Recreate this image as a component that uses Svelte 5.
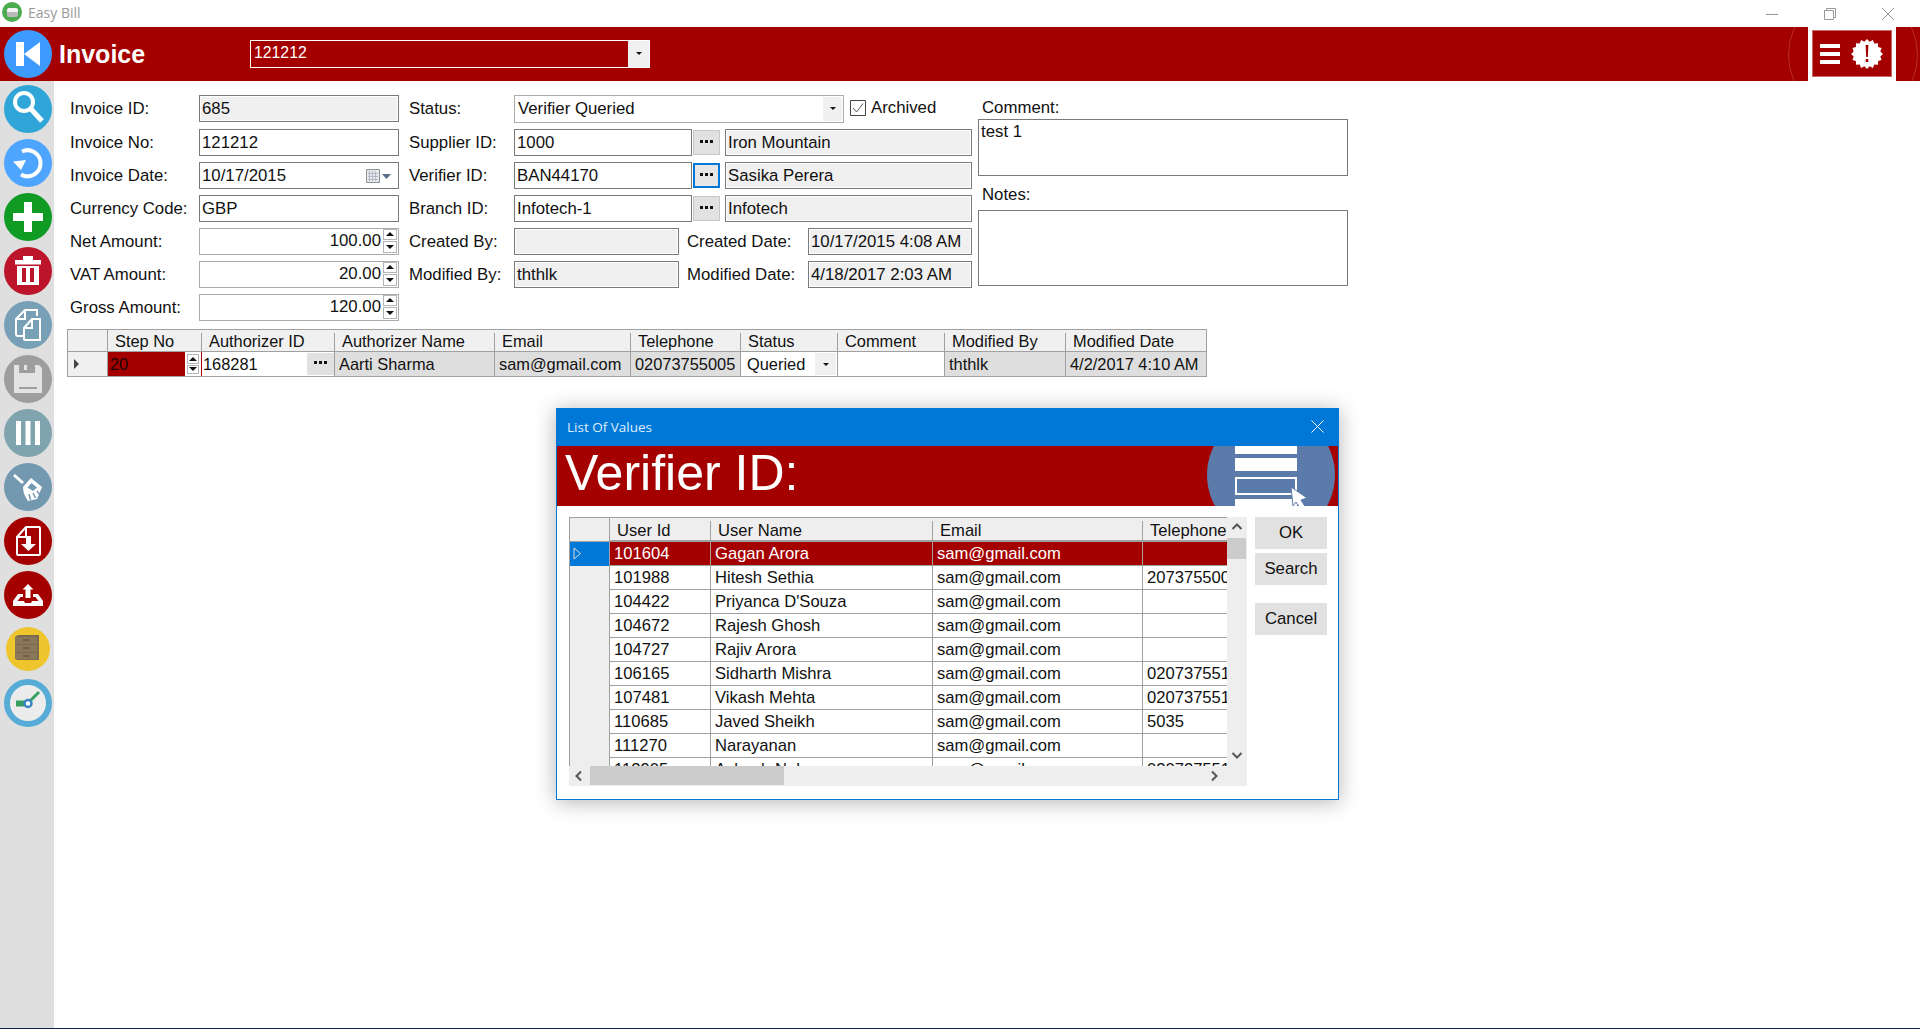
<script>
  const columns = [
    { title: "Step No", w: 94 },
    { title: "Authorizer ID", w: 133 },
    { title: "Authorizer Name", w: 160 },
    { title: "Email", w: 136 },
    { title: "Telephone", w: 110 },
    { title: "Status", w: 97 },
    { title: "Comment", w: 107 },
    { title: "Modified By", w: 121 },
    { title: "Modified Date", w: 141 },
  ];

  const users = [
    ["101604", "Gagan Arora", "sam@gmail.com", ""],
    ["101988", "Hitesh Sethia", "sam@gmail.com", "2073755005"],
    ["104422", "Priyanca D'Souza", "sam@gmail.com", ""],
    ["104672", "Rajesh Ghosh", "sam@gmail.com", ""],
    ["104727", "Rajiv Arora", "sam@gmail.com", ""],
    ["106165", "Sidharth Mishra", "sam@gmail.com", "02073755100"],
    ["107481", "Vikash Mehta", "sam@gmail.com", "02073755100"],
    ["110685", "Javed Sheikh", "sam@gmail.com", "5035"],
    ["111270", "Narayanan", "sam@gmail.com", ""],
    ["112905", "Ashesh Nale", "sam@gmail.com", "02073755140"],
  ];
</script>

{#snippet spin()}
  <span class="spin">
    <span class="spin-btn"><i class="up"></i></span>
    <span class="spin-btn"><i class="down"></i></span>
  </span>
{/snippet}

{#snippet dots()}
  <span class="dots"><i></i><i></i><i></i></span>
{/snippet}

<div class="window">
  <div class="titlebar">
    <div class="app-title">
      <span class="app-icon"><span></span></span>
      <span>Easy Bill</span>
    </div>
    <div class="window-controls">
      <svg width="12" height="12" viewBox="0 0 12 12"><path d="M0 6.5h12" stroke="#999" fill="none" /></svg>
      <svg width="12" height="12" viewBox="0 0 12 12"><path d="M.5 2.5h9v9h-9zM2.5 2.5v-2h9v9h-2" stroke="#999" fill="none" /></svg>
      <svg width="12" height="12" viewBox="0 0 12 12"><path d="M0 0l12 12M12 0L0 12" stroke="#999" fill="none" /></svg>
    </div>
  </div>

  <header class="header">
    <span class="arc"></span>
    <span class="nav-btn back">
      <svg width="48" height="48" viewBox="0 0 48 48"><path d="M12 12h8v24h-8zM20 24l16-12v24z" fill="#fff" /></svg>
    </span>
    <h1>Invoice</h1>
    <div class="combo">
      <span>121212</span>
      <span class="combo-btn"><i class="down small"></i></span>
    </div>
    <div class="header-actions">
      <div class="action-box">
        <span class="burger"><i></i><i></i><i></i></span>
        <svg width="32" height="32" viewBox="0 0 32 32">
          <path fill="#fff" d="M16 1l2.6 2.7 3.3-1.6 1.4 3.4 3.7-.3.1 3.7 3.5 1.2-1.3 3.4 2.7 2.5-2.7 2.5 1.3 3.4-3.5 1.2-.1 3.7-3.7-.3-1.4 3.4-3.3-1.6L16 31l-2.6-2.7-3.3 1.6-1.4-3.4-3.7.3-.1-3.7-3.5-1.2 1.3-3.4L0 16l2.7-2.5-1.3-3.4 3.5-1.2.1-3.7 3.7.3 1.4-3.4 3.3 1.6z" />
          <path fill="#a50000" d="M14.6 7h2.8l-.6 12h-1.600zM14.700 21h2.600v3h-2.600z" />
        </svg>
      </div>
    </div>
  </header>

  <div class="body">
    <nav class="sidebar">
      <span class="nav-btn search">
        <svg width="48" height="48" viewBox="0 0 48 48"><circle cx="20" cy="17" r="9" fill="none" stroke="#fff" stroke-width="4" /><path d="M27 24l11 12" stroke="#fff" stroke-width="5" fill="none" /></svg>
      </span>
      <span class="nav-btn refresh">
        <svg width="48" height="48" viewBox="0 0 48 48"><path d="M18 12.500a13 13 0 1 1-1 23" fill="none" stroke="#fff" stroke-width="4" /><path d="M9 22.500l13-1.500-5 10z" fill="#fff" /></svg>
      </span>
      <span class="nav-btn add">
        <svg width="48" height="48" viewBox="0 0 48 48"><path d="M20 9h8v11h11v8H28v11h-8V28H9v-8h11z" fill="#fff" /></svg>
      </span>
      <span class="nav-btn del">
        <svg width="48" height="48" viewBox="0 0 48 48"><path fill="#fff" fill-rule="evenodd" d="M11 13h8V9h10v4h8v4.500H11zM13 19h22v19H13zM18 21v14h4V21zM26 21v14h4V21z" /></svg>
      </span>
      <span class="nav-btn copy">
        <svg width="48" height="48" viewBox="0 0 48 48"><path d="M19 35h-5a2 2 0 0 1-2-2V18l9-9h12v6M21 9v9h-9M28 18h8v21H21a1 1 0 0 1-1-1V27zM28 18v9h-8" fill="none" stroke="#fff" stroke-width="2" /></svg>
      </span>
      <span class="nav-btn save">
        <svg width="48" height="48" viewBox="0 0 48 48"><path fill="#e3e3e3" fill-rule="evenodd" d="M10 10h5v8h16v-8h4l3 3v25H10zM20 10h3v5h-3zM15 32v2h18v-2z" /></svg>
      </span>
      <span class="nav-btn cols">
        <svg width="48" height="48" viewBox="0 0 48 48"><path d="M12 12h5v24h-5zM21.500 12h5v24h-5zM31 12h5v24h-5z" fill="#fff" /></svg>
      </span>
      <span class="nav-btn broom">
        <svg width="48" height="48" viewBox="0 0 48 48">
          <path d="M10 12l9 8" stroke="#fff" stroke-width="3" fill="none" />
          <path d="M19 24l8-9 11 9-5 12-9 2c-3-4-5-9-5-14z" fill="#fff" />
          <path d="M23.500 24.500l4-4.500 5.500 4.500-4 3.500z" fill="#7399b1" />
          <path d="M25 31l1.500 6M29 30l2.500 5M33 28l3 4" stroke="#7399b1" stroke-width="1.500" fill="none" />
        </svg>
      </span>
      <span class="nav-btn dl">
        <svg width="48" height="48" viewBox="0 0 48 48"><path d="M22 10h13a1 1 0 0 1 1 1v26a1 1 0 0 1-1 1H14a1 1 0 0 1-1-1V20zM22 10v10H13" fill="none" stroke="#fff" stroke-width="2" /><path d="M22 19h5v8h5l-7.500 7-7.500-7h5z" fill="#fff" /></svg>
      </span>
      <span class="nav-btn ul">
        <svg width="48" height="48" viewBox="0 0 48 48"><path d="M24 13l5.500 5.500h-3V27h-5v-8.500h-3z" fill="#fff" /><path d="M14 23h5v3h-2.500l-3 4H20l1 2h6l1-2h6.500l-3-4H29v-3h5l5 7v5H9v-5z" fill="#fff" /></svg>
      </span>
      <span class="nav-btn archive">
        <span class="yellow">
          <svg width="44" height="44" viewBox="0 0 44 44">
            <path d="M9 10l3-2h21v25H11l-2-1z" fill="#7a6a50" />
            <path d="M9 10h22v7H9zM9 18h22v7H9zM9 26h22v6H9z" fill="#8a7658" />
            <path d="M17 13h6M17 21h6M17 29h6" stroke="#554733" />
          </svg>
        </span>
      </span>
      <span class="nav-btn clock">
        <svg width="48" height="48" viewBox="0 0 48 48"><circle cx="24" cy="24" r="21" fill="#ececec" stroke="#56acd6" stroke-width="6" /><path d="M12 21.500h12v6H12z" fill="#37a060" /><path d="M24 24l11-11" stroke="#37a060" stroke-width="3" fill="none" /><circle cx="24" cy="24.500" r="3.500" fill="#fff" stroke="#3a86c4" stroke-width="2.500" /></svg>
      </span>
    </nav>

    <main class="content">
      <div class="form">
        <div class="col col-left">
          <div class="row first"><span class="label">Invoice ID:</span><span class="field ro grow">685</span></div>
          <div class="row"><span class="label">Invoice No:</span><span class="field grow">121212</span></div>
          <div class="row">
            <span class="label">Invoice Date:</span>
            <span class="field grow date">
              10/17/2015
              <svg width="26" height="18" viewBox="0 0 26 18">
                <path d="M1.500 2.500h13v13h-13z" fill="#e6e9ee" stroke="#8c8f94" />
                <path d="M4.500 4v10M7.500 4v10M10.500 4v10M3 6.500h10M3 9.500h10M3 12.500h10" stroke="#b3bac4" />
                <path d="M17 7h9l-4.500 5z" fill="#5a6e8c" />
              </svg>
            </span>
          </div>
          <div class="row"><span class="label">Currency Code:</span><span class="field grow">GBP</span></div>
          <div class="row"><span class="label">Net Amount:</span><span class="field grow num">100.00{@render spin()}</span></div>
          <div class="row"><span class="label">VAT Amount:</span><span class="field grow num">20.00{@render spin()}</span></div>
          <div class="row"><span class="label">Gross Amount:</span><span class="field grow num">120.00{@render spin()}</span></div>
        </div>

        <div class="col col-mid">
          <div class="row first">
            <span class="label">Status:</span>
            <span class="select">
              <span>Verifier Queried</span>
              <span class="select-btn"><i class="down small"></i></span>
            </span>
            <span class="check">
              <svg width="16" height="16" viewBox="0 0 16 16"><path d="M.5.5h15v15H.5z" fill="#fff" stroke="#444" /><path d="M3 8l3.500 4L13 3.500" fill="none" stroke="#555" /></svg>
              Archived
            </span>
          </div>
          <div class="row">
            <span class="label">Supplier ID:</span>
            <span class="field id">1000</span>
            <span class="more">{@render dots()}</span>
            <span class="field ro grow name">Iron Mountain</span>
          </div>
          <div class="row">
            <span class="label">Verifier ID:</span>
            <span class="field id">BAN44170</span>
            <span class="more focused">{@render dots()}</span>
            <span class="field ro grow name">Sasika Perera</span>
          </div>
          <div class="row">
            <span class="label">Branch ID:</span>
            <span class="field id">Infotech-1</span>
            <span class="more">{@render dots()}</span>
            <span class="field ro grow name">Infotech</span>
          </div>
          <div class="row">
            <span class="label">Created By:</span>
            <span class="field ro by"></span>
            <span class="label date-label">Created Date:</span>
            <span class="field ro grow">10/17/2015 4:08 AM</span>
          </div>
          <div class="row">
            <span class="label">Modified By:</span>
            <span class="field ro by">ththlk</span>
            <span class="label date-label">Modified Date:</span>
            <span class="field ro grow">4/18/2017 2:03 AM</span>
          </div>
        </div>

        <div class="col-right">
          <span class="note-label">Comment:</span>
          <div class="area comment">test 1</div>
          <span class="note-label notes-label">Notes:</span>
          <div class="area notes"></div>
        </div>
      </div>

      <div class="grid">
        <div class="grid-row head">
          <span class="cell rowhead"></span>
          {#each columns as col}
            <span class="cell" style="width: {col.w}px"><span class="sep">{col.title}</span></span>
          {/each}
        </div>
        <div class="grid-row data">
          <span class="cell rowhead"><i class="right"></i></span>
          <span class="cell step" style="width: {columns[0].w}px">20{@render spin()}</span>
          <span class="cell edit" style="width: {columns[1].w}px">168281<span class="more cell-more">{@render dots()}</span></span>
          <span class="cell" style="width: {columns[2].w}px">Aarti Sharma</span>
          <span class="cell" style="width: {columns[3].w}px">sam@gmail.com</span>
          <span class="cell" style="width: {columns[4].w}px">02073755005</span>
          <span class="cell edit status" style="width: {columns[5].w}px">Queried<span class="cell-drop"><i class="down small"></i></span></span>
          <span class="cell edit" style="width: {columns[6].w}px"></span>
          <span class="cell" style="width: {columns[7].w}px">ththlk</span>
          <span class="cell" style="width: {columns[8].w}px">4/2/2017 4:10 AM</span>
        </div>
      </div>
    </main>
  </div>

  <div class="taskbar-line"></div>

  <div class="dialog">
    <div class="dialog-title">
      <span>List Of Values</span>
      <svg width="13" height="13" viewBox="0 0 13 13"><path d="M.5.5l12 12M12.500.5l-12 12" stroke="#fff" fill="none" /></svg>
    </div>
    <div class="dialog-band">
      <span class="band-title">Verifier ID:</span>
      <svg class="band-art" width="128" height="60" viewBox="0 0 128 60">
        <circle cx="64" cy="29" r="64" fill="#5b7bab" />
        <path d="M28 0h62v8H28zM28 12h62v13H28zM28 53h62v7H28z" fill="#fff" />
        <path d="M29 32h60v16H29z" fill="#5b7bab" stroke="#fff" stroke-width="2" />
        <path d="M84 41l16 11-6 2 5 8h-6l-4-6-3 4z" fill="#fff" stroke="#5b7bab" />
      </svg>
    </div>
    <div class="dialog-body">
      <div class="lov">
        <div class="lov-view">
          <div class="lov-row lov-head">
            <span class="lov-rowhead"></span>
            <span class="lc c1"><span class="sep">User Id</span></span>
            <span class="lc c2"><span class="sep">User Name</span></span>
            <span class="lc c3"><span class="sep">Email</span></span>
            <span class="lc c4"><span class="sep">Telephone</span></span>
          </div>
          {#each users as u, i}
            <div class="lov-row" class:selected={i === 0}>
              <span class="lov-rowhead">
                {#if i === 0}
                  <svg width="9" height="13" viewBox="0 0 9 13"><path d="M1 1l6.500 5.500L1 12z" fill="#0078d7" stroke="#ddd" /></svg>
                {/if}
              </span>
              <span class="lc c1">{u[0]}</span>
              <span class="lc c2">{u[1]}</span>
              <span class="lc c3">{u[2]}</span>
              <span class="lc c4">{u[3]}</span>
            </div>
          {/each}
        </div>
        <div class="vscroll">
          <svg width="20" height="20" viewBox="0 0 20 20"><path d="M5.500 12L10 7.500l4.500 4.500" fill="none" stroke="#555" stroke-width="2" /></svg>
          <span class="vthumb"></span>
          <svg class="vdown" width="20" height="20" viewBox="0 0 20 20"><path d="M5.500 8L10 12.500 14.500 8" fill="none" stroke="#555" stroke-width="2" /></svg>
        </div>
        <div class="hscroll">
          <svg width="21" height="20" viewBox="0 0 21 20"><path d="M12 5.500L7.500 10l4.500 4.500" fill="none" stroke="#555" stroke-width="2" /></svg>
          <span class="hthumb"></span>
          <svg class="hright" width="20" height="20" viewBox="0 0 20 20"><path d="M8 5.500l4.500 4.500L8 14.500" fill="none" stroke="#555" stroke-width="2" /></svg>
        </div>
      </div>
      <div class="lov-actions">
        <span class="lov-btn">OK</span>
        <span class="lov-btn">Search</span>
        <span class="lov-btn cancel">Cancel</span>
      </div>
    </div>
  </div>
</div>

<style>
  :global(body) {
    margin: 0;
    background: #fff;
  }

  i {
    display: block;
    font-style: normal;
  }

  .window {
    position: relative;
    display: flex;
    flex-direction: column;
    width: 1920px;
    height: 1029px;
    overflow: hidden;
    font-family: "Liberation Sans", Arial, sans-serif;
    font-size: 16.8px;
    color: #111;
  }

  .titlebar {
    display: flex;
    justify-content: space-between;
    align-items: center;
    height: 27px;
    flex: none;
  }

  .app-title {
    display: flex;
    align-items: center;
    gap: 6px;
    padding: 0 0 3px 2px;
    font-family: "Open Sans", sans-serif;
    font-size: 14px;
    color: #999;
  }

  .app-icon {
    display: flex;
    align-items: center;
    justify-content: center;
    width: 20px;
    height: 20px;
    border-radius: 50%;
    background: #4cab4c;
  }

  .app-icon span {
    width: 11px;
    height: 9px;
    border-radius: 2px;
    background: linear-gradient(#f4f4f4 50%, #b9b9b9 50%);
  }

  .window-controls {
    display: flex;
    gap: 46px;
    padding-right: 26px;
  }

  .header {
    position: relative;
    display: flex;
    align-items: center;
    flex: none;
    height: 54px;
    overflow: hidden;
    background: #a50000;
    color: #fff;
  }

  .arc {
    position: absolute;
    left: 1788px;
    top: -37px;
    width: 128px;
    height: 128px;
    border: 1px solid rgba(255, 255, 255, 0.18);
    border-radius: 50%;
  }

  .header h1 {
    margin: 0 0 0 7px;
    width: 191px;
    font-size: 25px;
    font-weight: 700;
    line-height: 1;
  }

  .combo {
    display: flex;
    align-items: stretch;
    justify-content: space-between;
    box-sizing: border-box;
    width: 400px;
    height: 28px;
    margin-bottom: 1px;
    padding-left: 3px;
    border: 1px solid #fff;
    font-size: 15.800px;
    line-height: 24px;
  }

  .combo-btn {
    display: flex;
    align-items: center;
    justify-content: center;
    width: 21px;
    background: #f0f0f0;
  }

  .header-actions {
    position: relative;
    display: flex;
    align-items: center;
    justify-content: center;
    box-sizing: border-box;
    width: 88px;
    height: 54px;
    margin-left: auto;
    margin-right: 24px;
    background: #fff;
  }

  .action-box {
    display: flex;
    align-items: center;
    gap: 11px;
    box-sizing: border-box;
    width: 80px;
    height: 47px;
    margin-bottom: 1px;
    padding-left: 7px;
    background: #a50000;
    border: 1px solid #c96a6a;
  }

  .burger {
    display: flex;
    flex-direction: column;
    gap: 4px;
  }

  .burger i {
    width: 20px;
    height: 4px;
    background: #fff;
  }

  .body {
    display: flex;
    flex: 1;
    min-height: 0;
  }

  .sidebar {
    display: flex;
    flex-direction: column;
    align-items: center;
    gap: 6px;
    flex: none;
    box-sizing: border-box;
    width: 54px;
    padding: 4px 0 0 2px;
    background: #dfdfdf;
  }

  .nav-btn {
    display: block;
    flex: none;
    width: 48px;
    height: 48px;
    border-radius: 50%;
  }

  .nav-btn svg {
    display: block;
  }

  .header .nav-btn {
    margin-left: 4px;
  }

  .back { background: #3d9bff; }
  .search { background: #2fa5d8; }
  .refresh { background: #4da5ff; }
  .add { background: #0f9b24; }
  .del { background: #bc142b; }
  .copy { background: #77a0b6; }
  .save { background: #9e9e9e; }
  .cols { background: #7fa4ad; }
  .broom { background: #7399b1; }
  .dl, .ul { background: #a50000; }

  .archive {
    display: flex;
    align-items: center;
    justify-content: center;
  }

  .yellow {
    display: block;
    width: 44px;
    height: 44px;
    border-radius: 50%;
    background: #eec52c;
  }

  .content {
    flex: 1;
    min-width: 0;
    padding: 14px 0 0 13px;
  }

  .form {
    display: flex;
    height: 234px;
  }

  .col {
    display: flex;
    flex-direction: column;
    gap: 6px;
  }

  .col-left {
    width: 332px;
    padding-left: 3px;
    box-sizing: border-box;
  }

  .col-mid {
    width: 563px;
    margin-left: 10px;
  }

  .col-right {
    display: flex;
    flex-direction: column;
    width: 370px;
    margin-left: 6px;
  }

  .row {
    display: flex;
    align-items: center;
    height: 27px;
    flex: none;
  }

  .row.first {
    margin-bottom: 1px;
  }

  .label {
    flex: none;
    white-space: nowrap;
  }

  .col-left .label {
    width: 129px;
  }

  .col-mid .label {
    width: 105px;
  }

  .col-mid .date-label {
    width: 121px;
    margin-left: 8px;
  }

  .field {
    display: flex;
    align-items: center;
    box-sizing: border-box;
    height: 27px;
    padding: 0 2px;
    border: 1px solid #7a7a7a;
    background: #fff;
    white-space: nowrap;
    overflow: hidden;
  }

  .grow {
    flex: 1;
    min-width: 0;
  }

  .ro {
    background: #f0f0f0;
    box-shadow: inset 0 0 0 1px #fff;
  }

  .id {
    width: 178px;
    flex: none;
  }

  .by {
    width: 165px;
    flex: none;
  }

  .name {
    margin-left: 5px;
  }

  .date {
    justify-content: space-between;
    padding-right: 7px;
  }

  .num {
    justify-content: flex-end;
    padding: 0 1px 2px 2px;
    border-color: #acacac;
  }

  .spin {
    display: flex;
    flex-direction: column;
    gap: 1px;
    flex: none;
    margin-left: 2px;
  }

  .spin-btn {
    display: flex;
    align-items: center;
    justify-content: center;
    box-sizing: border-box;
    width: 14px;
    height: 11.500px;
    border: 1px solid #b5b5b5;
    background: #fff;
  }

  .up, .down {
    width: 0;
    height: 0;
    border-left: 4px solid transparent;
    border-right: 4px solid transparent;
  }

  .up { border-bottom: 4px solid #111; }
  .down { border-top: 4px solid #111; }

  .down.small {
    border-left-width: 3px;
    border-right-width: 3px;
    border-top-width: 3px;
  }

  .right {
    width: 0;
    height: 0;
    border-top: 5px solid transparent;
    border-bottom: 5px solid transparent;
    border-left: 5px solid #444;
  }

  .select {
    display: flex;
    align-items: center;
    justify-content: space-between;
    box-sizing: border-box;
    width: 330px;
    height: 28px;
    padding-left: 3px;
    border: 1px solid #acacac;
    box-shadow: inset 0 0 0 1px #fff;
  }

  .select-btn {
    display: flex;
    align-items: center;
    justify-content: center;
    width: 19px;
    height: 24px;
    margin-right: 1px;
    background: #f0f0f0;
  }

  .check {
    display: flex;
    align-items: center;
    gap: 5px;
    margin: -2px 0 0 6px;
    white-space: nowrap;
  }

  .more {
    display: flex;
    align-items: center;
    justify-content: center;
    flex: none;
    box-sizing: border-box;
    width: 27px;
    height: 25px;
    margin-left: 1px;
    border: 1px solid #c8c8c8;
    background: #e1e1e1;
  }

  .more.focused {
    border: 2px solid #0078d7;
    background: #e6e6e6;
  }

  .dots {
    display: flex;
    gap: 2px;
    margin-bottom: 3px;
  }

  .dots i {
    width: 3px;
    height: 3px;
    background: #111;
  }

  .note-label {
    margin: 0 0 0 4px;
    height: 24px;
    line-height: 26px;
    flex: none;
  }

  .notes-label {
    height: 34px;
    line-height: 38px;
  }

  .area {
    box-sizing: border-box;
    border: 1px solid #7a7a7a;
    flex: none;
    padding: 0 2px;
    line-height: 24px;
  }

  .comment { height: 57px; }
  .notes { height: 76px; }

  .grid {
    box-sizing: border-box;
    width: 1140px;
    border: 1px solid #a0a0a0;
    font-size: 16.400px;
  }

  .grid-row {
    display: flex;
  }

  .head {
    height: 21px;
    background: #f0f0f0;
    border-bottom: 1px solid #a0a0a0;
  }

  .data {
    height: 24px;
    background: #dedede;
  }

  .cell {
    display: flex;
    align-items: center;
    flex: none;
    box-sizing: border-box;
    padding-left: 4px;
    border-right: 1px solid #a0a0a0;
    white-space: nowrap;
    overflow: hidden;
  }

  .grid-row .cell:last-child {
    border-right: none;
  }

  .head .cell {
    border-right: none;
    padding: 3px 0 0;
  }

  .head .cell .sep {
    display: block;
    width: 100%;
    height: 18px;
    padding-left: 7px;
    line-height: 16px;
    border-right: 1px solid #a0a0a0;
  }

  .head .cell:last-child .sep {
    border-right: none;
  }

  .rowhead {
    width: 40px;
    padding-left: 7px;
    background: #f0f0f0;
  }

  .data .rowhead {
    padding-left: 6px;
  }

  .head .rowhead {
    border-right: 1px solid #a0a0a0;
    padding: 0;
  }

  .step {
    justify-content: space-between;
    padding-left: 2px;
    background: #a50000;
    color: #1a0000;
    border-right-color: #a50000;
  }

  .step .spin {
    padding: 2px;
    background: #fff;
    gap: 1px;
  }

  .step .spin-btn {
    width: 12px;
    height: 9.500px;
  }

  .edit {
    position: relative;
    background: #fff;
    padding-left: 1px;
  }

  .status {
    padding-left: 6px;
  }

  .cell-more {
    position: absolute;
    right: 0;
    top: 1px;
    height: 22px;
    border: none;
  }

  .cell-drop {
    position: absolute;
    right: 1px;
    top: 1px;
    display: flex;
    align-items: center;
    justify-content: center;
    width: 21px;
    height: 22px;
    background: #f0f0f0;
  }

  .taskbar-line {
    flex: none;
    height: 1px;
    background: #0b2550;
  }

  .dialog {
    position: absolute;
    left: 556px;
    top: 408px;
    display: flex;
    flex-direction: column;
    box-sizing: border-box;
    width: 783px;
    height: 392px;
    background: #fff;
    border: 1px solid #0078d7;
    box-shadow: 0 2px 20px rgba(0, 0, 0, 0.3);
  }

  .dialog-title {
    display: flex;
    align-items: center;
    justify-content: space-between;
    flex: none;
    box-sizing: border-box;
    height: 37px;
    padding: 0 14px 2px 10px;
    background: #0078d7;
    color: #dfeefa;
    font-family: "Open Sans", sans-serif;
    font-size: 13.500px;
  }

  .dialog-band {
    position: relative;
    display: flex;
    align-items: center;
    flex: none;
    box-sizing: border-box;
    height: 60px;
    padding: 0 0 7px 8px;
    overflow: hidden;
    background: #a50000;
    color: #fff;
  }

  .band-title {
    font-size: 50px;
    line-height: 1;
  }

  .band-art {
    position: absolute;
    left: 650px;
    top: 0;
  }

  .dialog-body {
    display: flex;
    padding: 11px 0 0 12px;
  }

  .lov {
    position: relative;
    box-sizing: border-box;
    width: 678px;
    height: 269px;
    background: #eee;
  }

  .lov-view {
    position: absolute;
    inset: 0 20px 20px 0;
    box-sizing: border-box;
    overflow: hidden;
    border: 1px solid #a0a0a0;
    border-right: none;
    border-bottom: none;
    background: #fff;
    font-size: 16.600px;
  }

  .lov-row {
    display: flex;
    align-items: center;
    height: 24px;
    box-sizing: border-box;
    border-bottom: 1px solid #a0a0a0;
    white-space: nowrap;
  }

  .lov-head {
    height: 24px;
    background: #eee;
    border-bottom-width: 2px;
  }

  .lov-rowhead {
    display: flex;
    align-items: center;
    flex: none;
    box-sizing: border-box;
    width: 40px;
    height: 24px;
    padding-left: 3px;
    background: #eee;
    border-right: 1px solid #a0a0a0;
  }

  .selected {
    background: #a50000;
    color: #fff;
  }

  .selected .lov-rowhead {
    background: #0078d7;
  }

  .lc {
    flex: none;
    box-sizing: border-box;
    height: 23px;
    padding-left: 4px;
    line-height: 23px;
    border-right: 1px solid #a0a0a0;
    overflow: hidden;
  }

  .c1 { width: 101px; }
  .c2 { width: 222px; }
  .c3 { width: 210px; }
  .c4 { width: 130px; border-right: none; }

  .lov-head .lc {
    padding: 3px 0 0;
    border-right: none;
  }

  .lov-head .sep {
    display: block;
    height: 19px;
    padding-left: 7px;
    line-height: 19px;
    border-right: 1px solid #a0a0a0;
  }

  .lov-head .c4 .sep {
    border-right: none;
  }

  .vscroll {
    position: absolute;
    right: 0;
    top: 0;
    bottom: 20px;
    width: 20px;
    background: #eee;
  }

  .vscroll svg {
    display: block;
  }

  .vthumb {
    position: absolute;
    left: 0;
    top: 21px;
    width: 19px;
    height: 21px;
    background: #ccc;
  }

  .vdown {
    position: absolute;
    bottom: 1px;
    left: 0;
  }

  .hscroll {
    position: absolute;
    left: 0;
    right: 0;
    bottom: 0;
    height: 20px;
    background: #eee;
  }

  .hscroll svg {
    display: block;
  }

  .hthumb {
    position: absolute;
    left: 21px;
    top: 0;
    width: 194px;
    height: 19px;
    background: #ccc;
  }

  .hright {
    position: absolute;
    right: 23px;
    top: 0;
  }

  .lov-actions {
    display: flex;
    flex-direction: column;
    gap: 4px;
    margin-left: 8px;
  }

  .lov-btn {
    display: flex;
    align-items: center;
    justify-content: center;
    width: 72px;
    height: 32px;
    background: #e1e1e1;
    font-size: 16.800px;
  }

  .lov-btn.cancel {
    margin-top: 14px;
  }
</style>
